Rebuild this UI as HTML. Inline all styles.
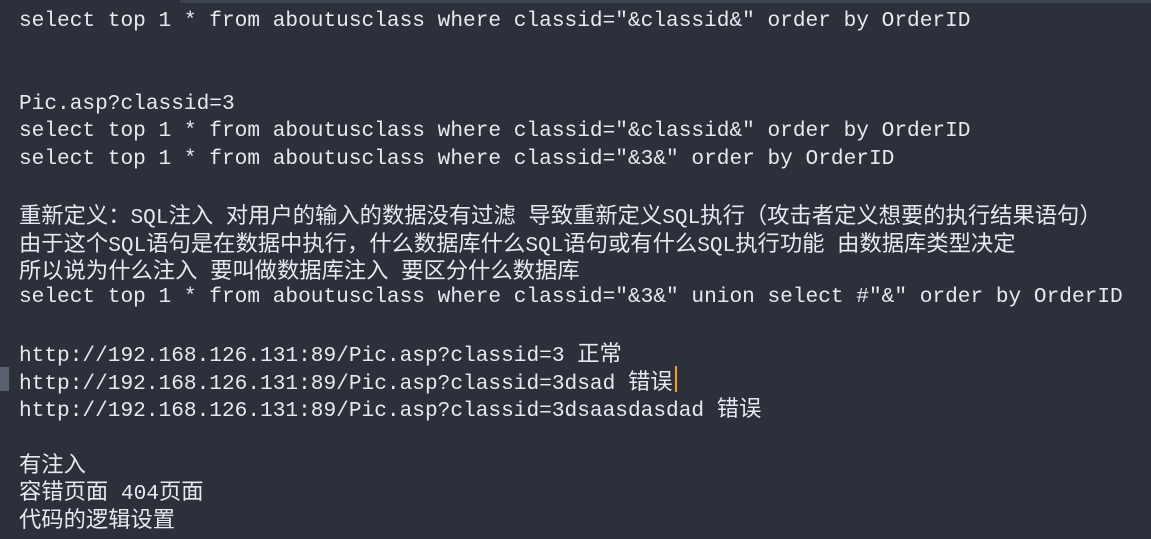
<!DOCTYPE html>
<html><head><meta charset="utf-8"><style>
html,body{margin:0;padding:0;}
body{width:1151px;height:539px;background:#2b303b;overflow:hidden;position:relative;}
.top{position:absolute;left:180px;top:0;width:971px;height:3px;background:#3d4450;}
.t{position:absolute;left:19px;top:8px;margin:0;font-family:"Liberation Mono","Noto Sans CJK SC",monospace;font-size:21.15px;color:#e6e9ee;}
.t div{height:27.6px;line-height:27.6px;white-space:pre;}
.c{font-family:"Noto Sans CJK SC",sans-serif;font-size:22.3px;line-height:27.6px;}
.g{position:absolute;left:0;top:367px;width:9px;height:24px;background:#596070;}
.cur{position:absolute;left:675px;top:366px;width:2px;height:26px;background:#f0a030;}
</style></head><body>
<div class="top"></div><div class="g"></div><div class="cur"></div>
<div class="t"><div>select top 1 * from aboutusclass where classid="&amp;classid&amp;" order by OrderID</div><div></div><div></div><div>Pic.asp?classid=3</div><div>select top 1 * from aboutusclass where classid="&amp;classid&amp;" order by OrderID</div><div>select top 1 * from aboutusclass where classid="&amp;3&amp;" order by OrderID</div><div></div><div><span class="c">重新定义：</span>SQL<span class="c">注入</span> <span class="c">对用户的输入的数据没有过滤</span> <span class="c">导致重新定义</span>SQL<span class="c">执行（攻击者定义想要的执行结果语句）</span></div><div><span class="c">由于这个</span>SQL<span class="c">语句是在数据中执行，什么数据库什么</span>SQL<span class="c">语句或有什么</span>SQL<span class="c">执行功能</span> <span class="c">由数据库类型决定</span></div><div><span class="c">所以说为什么注入</span> <span class="c">要叫做数据库注入</span> <span class="c">要区分什么数据库</span></div><div>select top 1 * from aboutusclass where classid="&amp;3&amp;" union select #"&amp;" order by OrderID</div><div></div><div>http://192.168.126.131:89/Pic.asp?classid=3 <span class="c">正常</span></div><div>http://192.168.126.131:89/Pic.asp?classid=3dsad <span class="c">错误</span></div><div>http://192.168.126.131:89/Pic.asp?classid=3dsaasdasdad <span class="c">错误</span></div><div></div><div><span class="c">有注入</span></div><div><span class="c">容错页面</span> 404<span class="c">页面</span></div><div><span class="c">代码的逻辑设置</span></div></div>
</body></html>
